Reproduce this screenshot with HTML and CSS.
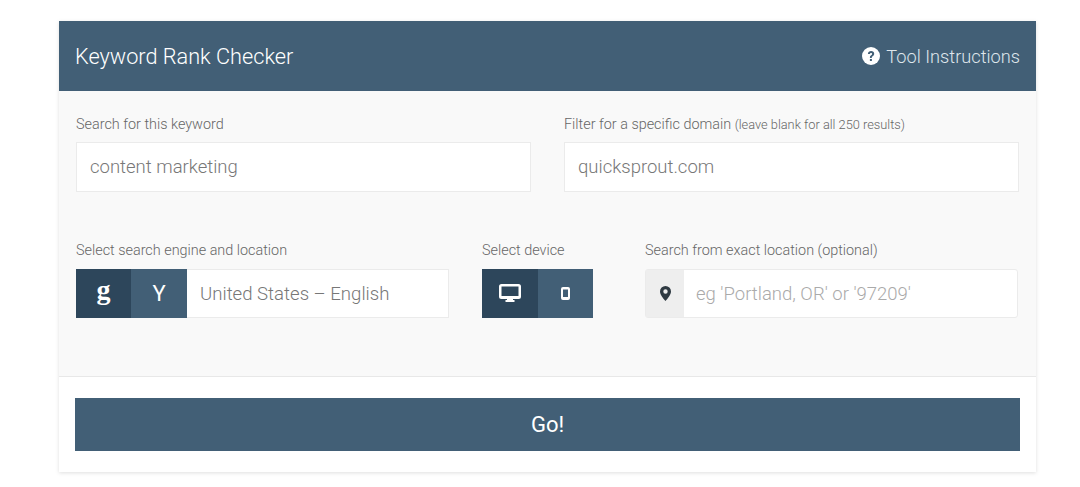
FILE: index.html
```html
<!DOCTYPE html>
<html lang="en">
<head>
<meta charset="utf-8">
<title>Keyword Rank Checker</title>
<link rel="stylesheet" href="styles.css">
</head>
<body>
<main class="card">
  <header class="card-head">
    <h1 class="title">Keyword Rank Checker</h1>
    <a class="help" href="#">
      <svg class="help-icon" viewBox="0 0 18 18" aria-hidden="true"><circle cx="9" cy="9" r="9" fill="#fff"/><path d="M5.900 6.900C6.100 5.100 7.400 4.100 9.100 4.100c1.800 0 3.100 1.100 3.100 2.700 0 1.200-.7 1.800-1.500 2.400-.6.4-.9.7-.9 1.400v.3H7.900v-.5c0-1.100.5-1.700 1.200-2.200.6-.4 1-.8 1-1.300 0-.6-.4-1-1.100-1-.7 0-1.100.4-1.200 1.100z" fill="#425f76"/><rect x="7.900" y="12" width="2" height="2" fill="#425f76"/></svg>
      <span>Tool Instructions</span>
    </a>
  </header>

  <section class="card-body">
    <div class="row-top">
      <div class="field">
        <label class="label">Search for this keyword</label>
        <div class="input">content marketing</div>
      </div>
      <div class="field">
        <label class="label">Filter for a specific domain <small class="hint">(leave blank for all 250 results)</small></label>
        <div class="input">quicksprout.com</div>
      </div>
    </div>

    <div class="row-bottom">
      <div class="field">
        <label class="label">Select search engine and location</label>
        <div class="group">
          <span class="seg seg-dark seg-g">g</span>
          <span class="seg seg-light seg-y">Y</span>
          <span class="group-text">United States – English</span>
        </div>
      </div>
      <div class="field">
        <label class="label">Select device</label>
        <div class="group group-device">
          <span class="seg seg-dark seg-device">
            <svg class="icon-desktop" viewBox="0 0 22 18" aria-hidden="true"><path fill-rule="evenodd" d="M2.500 0h17A2.500 2.500 0 0 1 22 2.500v10a2.500 2.500 0 0 1-2.500 2.500H14v1h1.500v2h-9v-2H8v-1H2.500A2.500 2.500 0 0 1 0 12.500v-10A2.500 2.500 0 0 1 2.500 0zM2.500 2.500v9.500h17V2.500z" fill="#fff"/></svg>
          </span>
          <span class="seg seg-light seg-device">
            <svg class="icon-mobile" viewBox="0 0 9 13" aria-hidden="true"><path fill-rule="evenodd" d="M2 0h5a2 2 0 0 1 2 2v9a2 2 0 0 1-2 2H2a2 2 0 0 1-2-2V2a2 2 0 0 1 2-2zM2 2.500v7.500h5V2.500z" fill="#fff"/></svg>
          </span>
        </div>
      </div>
      <div class="field">
        <label class="label">Search from exact location (optional)</label>
        <div class="group group-location">
          <span class="pin">
            <svg class="icon-pin" viewBox="0 0 11 15" aria-hidden="true"><path fill-rule="evenodd" d="M5.500 0A5.500 5.500 0 0 1 11 5.500c0 3.200-3.300 7-5.500 9.500C3.300 12.500 0 8.700 0 5.500A5.500 5.500 0 0 1 5.500 0zm0 3.300a2.200 2.200 0 1 0 0 4.400 2.200 2.200 0 0 0 0-4.400z" fill="#2f3a42"/></svg>
          </span>
          <span class="group-text placeholder">eg 'Portland, OR' or '97209'</span>
        </div>
      </div>
    </div>
  </section>

  <footer class="card-foot">
    <button class="go" type="button">Go!</button>
  </footer>
</main>
</body>
</html>
```

FILE: styles.css
```css
* { box-sizing: border-box; }

html, body { margin: 0; height: 100%; background: #fff; }

body {
  padding: 21px 44px 0 59px;
  font-family: Roboto, "Liberation Sans", sans-serif;
  font-weight: 300;
  color: #666;
  overflow: hidden;
}

.card {
  width: 977px;
  height: 451px;
  display: flex;
  flex-direction: column;
  background: #fff;
  box-shadow: 0 1px 4px rgba(0, 0, 0, .13);
}

.card-head {
  height: 70px;
  flex: none;
  padding: 0 16px;
  display: flex;
  align-items: center;
  justify-content: space-between;
  background: #425f76;
  color: #fff;
}

.title { margin: 0; font-size: 21.700px; font-weight: 300; }

.help {
  display: flex;
  align-items: center;
  gap: 6px;
  color: #dfe6ec;
  font-size: 18.200px;
  font-weight: 300;
  text-decoration: none;
}

.help-icon { width: 18px; height: 18px; }

.card-body {
  height: 286px;
  flex: none;
  padding: 25px 17px 0;
  background: #f9f9f9;
  border-bottom: 1px solid #e8e8e8;
}

.row-top { display: flex; gap: 33px; }
.row-top .field { width: 455px; }

.row-bottom { display: flex; margin-top: 50px; }
.row-bottom .field:nth-child(1) { width: 373px; margin-right: 33px; }
.row-bottom .field:nth-child(2) { width: 111px; margin-right: 52px; }
.row-bottom .field:nth-child(3) { width: 373px; }

.label {
  display: block;
  height: 18px;
  margin-bottom: 8px;
  font-size: 14.400px;
  line-height: 18px;
  font-weight: 300;
  color: #666;
  white-space: nowrap;
}
.row-bottom .label { margin-bottom: 9px; }

.hint { font-size: 12.800px; }

.input {
  height: 49.500px;
  padding: 0 13px;
  display: flex;
  align-items: center;
  background: #fff;
  border: 1px solid #ebebeb;
  font-size: 18.500px;
  color: #777;
}

.group {
  height: 49.500px;
  display: flex;
  background: #fff;
  border: 1px solid #ebebeb;
}

.group-device { border: 0; background: none; }

.seg {
  flex: none;
  height: 49.500px;
  margin: -1px 0;
  display: flex;
  align-items: center;
  justify-content: center;
  color: #fff;
}
.group-device .seg { margin: 0; }

.seg-dark { background: #2d465b; }
.seg-light { background: #425f76; }

.seg-g {
  width: 55px;
  margin-left: -1px;
  font-family: "Liberation Serif", serif;
  font-size: 28px;
  font-weight: 700;
  padding-bottom: 7px;
}
.seg-y { width: 56px; font-size: 22px; font-weight: 400; }
.seg-device { width: 55.500px; }

.group-text {
  align-self: center;
  padding: 1px 0 0 13px;
  font-size: 18.600px;
  color: #777;
  white-space: nowrap;
}

.placeholder { padding-left: 12px; color: #aaa; font-size: 18.500px; }

.icon-desktop { width: 22px; height: 18px; }
.icon-mobile { width: 9px; height: 13px; }
.icon-pin { width: 11px; height: 15px; }

.group-location { border-radius: 3px; }

.pin {
  width: 38px;
  display: flex;
  align-items: center;
  justify-content: center;
  background: #eee;
  flex: none;
}

.card-foot { flex: 1; padding: 21px 16px 0; }

.go {
  display: block;
  width: 945px;
  height: 53px;
  border: 0;
  background: #425f76;
  color: #fff;
  font-family: Roboto, "Liberation Sans", sans-serif;
  font-size: 22px;
  font-weight: 400;
}
```
